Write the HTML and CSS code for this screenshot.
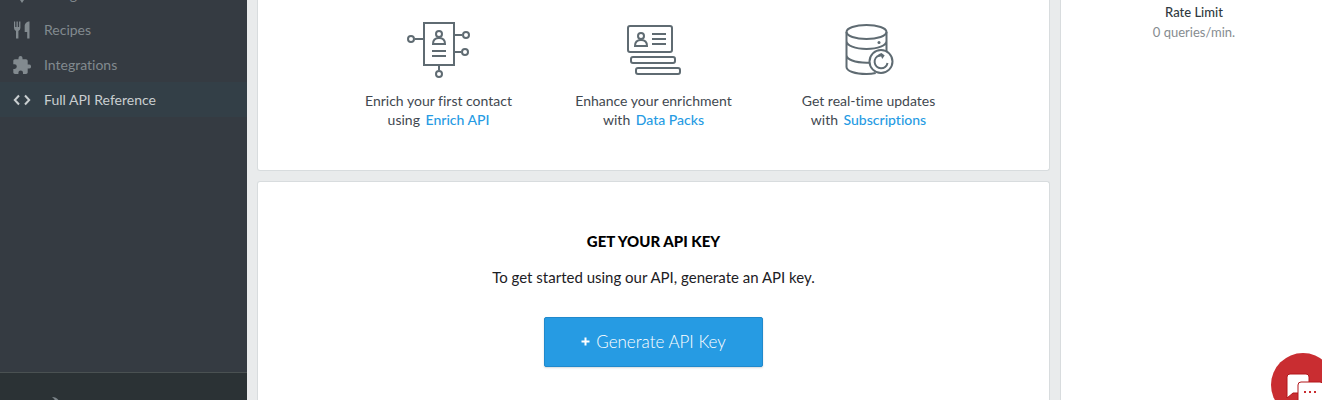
FILE: index.html
```html
<!DOCTYPE html>
<html lang="en">
<head>
<meta charset="utf-8">
<title>API Dashboard</title>
<link rel="stylesheet" href="styles.css">
</head>
<body>
<div class="layout">
  <aside class="sidebar">
    <nav class="nav">
      <a class="nav-item" href="#widgets">
        <svg class="nav-icon" viewBox="0 0 18 18"><path d="M9 17 5 11a6 6 0 1 1 8 0z"/></svg>
        Widgets
      </a>
      <a class="nav-item" href="#recipes">
        <svg class="nav-icon" viewBox="0 0 18 18"><path d="M1 0.500h1.200v5.500h1.300v-5.500h1.300v5.500h1.300v-5.500h1.300v6.500a3.200 3.200 0 0 1-2 2.900v7.500h-2.400v-7.500a3.200 3.200 0 0 1-2-2.900zM16.500 0.500v16.900h-2.300v-6.500h-2.500v-5.900c0-2.500 2.300-4.500 4.800-4.500z"/></svg>
        Recipes
      </a>
      <a class="nav-item" href="#integrations">
        <svg class="nav-icon" viewBox="0 0 18 18"><path d="M16 8.500h-1.300v-3.600c0-.9-.8-1.700-1.700-1.700h-3.500v-1.200a2 2 0 0 0-4 0v1.200h-3.500c-1 0-1.700.8-1.700 1.700v3.400h1.200a2.300 2.300 0 0 1 0 4.600H.3v3.400c0 .9.700 1.600 1.700 1.600h3.400v-1.200a2.300 2.300 0 0 1 4.600 0v1.200h3c.9 0 1.700-.7 1.700-1.600v-3.700H16a2.050 2.050 0 0 0 0-4.100z"/></svg>
        Integrations
      </a>
      <a class="nav-item nav-item-active" href="#reference">
        <svg class="nav-icon nav-icon-line" viewBox="0 0 18 18"><path d="M6 4.500 1.800 9 6 13.500M12 4.500 16.200 9 12 13.500"/></svg>
        Full API Reference
      </a>
    </nav>
    <div class="sidebar-footer">
      <svg class="footer-logo" viewBox="0 0 20 20"><path d="M4 0q5 0 7 4v16h-3v-13q0-4-4-7z"/></svg>
    </div>
  </aside>

  <main class="main">
    <section class="card features">
      <div class="feature">
        <svg class="feature-icon" viewBox="0 0 64 58">
          <rect x="17" y="2" width="30" height="42"/>
          <path d="M8 18h9M47 14h8M47 31h7M32 44v5M25 30h14M25 35h14"/>
          <circle cx="4" cy="18" r="3"/><circle cx="59" cy="14" r="3"/><circle cx="58" cy="31" r="3"/><circle cx="32" cy="53" r="3"/>
          <circle cx="32" cy="13" r="3"/><path d="M26 23c0-3.500 2-6 6-6s6 2.500 6 6z"/>
        </svg>
        <p class="feature-text">Enrich your first contact<br>using <a class="link" href="#enrich">Enrich API</a></p>
      </div>
      <div class="feature">
        <svg class="feature-icon" viewBox="0 0 64 58">
          <rect x="6" y="5" width="44" height="26" rx="2"/>
          <circle cx="19" cy="15" r="3"/><path d="M13 25c0-3.500 2-6 6-6s6 2.500 6 6zM30 13h14M30 18h14M30 23h14"/>
          <rect x="9" y="36" width="44" height="6" rx="2"/>
          <rect x="14" y="47" width="44" height="6" rx="2"/>
        </svg>
        <p class="feature-text">Enhance your enrichment<br>with <a class="link" href="#packs">Data Packs</a></p>
      </div>
      <div class="feature">
        <svg class="feature-icon" viewBox="0 0 64 58">
          <ellipse cx="29.500" cy="11" rx="20" ry="7"/>
          <path d="M9.500 11v35c0 4 8.500 7 20 7 3.500 0 6.500-.3 9.200-.9M49.500 11v19M9.500 20c0 4.500 8.500 8 20 8s20-3.500 20-8M9.500 34c0 4.500 8.500 7.700 20 7.700h3"/>
          <circle cx="42" cy="21.500" r="1.500" class="dot"/>
          <circle class="refresh-disc" cx="44" cy="40.500" r="11.500"/>
          <path d="M42.500 34.500a6.500 6.500 0 1 0 8 7.500"/>
          <path class="dot" d="M41.500 33.200l3-1.200 3.200 2.500-2.500 3.500-1-2.500-2.700.3z"/>
        </svg>
        <p class="feature-text">Get real-time updates<br>with <a class="link" href="#subscriptions">Subscriptions</a></p>
      </div>
    </section>

    <section class="card api-key">
      <h2 class="api-key-title">GET YOUR API KEY</h2>
      <p class="api-key-text">To get started using our API, generate an API key.</p>
      <button class="button" type="button">
        <svg class="plus" viewBox="0 0 9 9"><path d="M4.500 0.500v8M0.500 4.500h8"/></svg>
        Generate API Key
      </button>
    </section>
  </main>

  <aside class="usage">
    <h3 class="usage-title">Rate Limit</h3>
    <p class="usage-value">0 queries/min.</p>
  </aside>
</div>
<button class="chat" type="button" aria-label="Open chat">
  <svg class="chat-icon" viewBox="0 0 64 64">
    <path d="M19 21h16q3 0 3 3v16h-16l-6 5V24q0-3 3-3z"/>
    <path d="M30 29h19q3 0 3 3v23l-6-5H30q-3 0-3-3V32q0-3 3-3z"/>
    <path class="chat-dots" d="M33 38h2v2h-2zM38 38h2v2h-2zM43 38h2v2h-2z"/>
  </svg>
</button>
</body>
</html>
```

FILE: styles.css
```css
* { box-sizing: border-box; }

body {
  margin: 0;
  overflow: hidden;
  background: #e9ebec;
  color: #3f4850;
  font-family: Lato, "Liberation Sans", sans-serif;
  font-size: 14px;
  font-variant-ligatures: none;
}

h2, h3, p { margin: 0; }

.layout {
  display: grid;
  grid-template-columns: 247px 1fr 262px;
  height: 100vh;
  overflow: hidden;
}

.sidebar {
  display: flex;
  flex-direction: column;
  justify-content: space-between;
  min-height: 0;
  background: #353b42;
}

.nav { margin-top: -23px; }

.nav-item {
  display: flex;
  align-items: center;
  gap: 13px;
  height: 35px;
  padding: 0 13px;
  color: #828a8f;
  font-size: 14px;
  text-decoration: none;
}

.nav-item-active {
  background: #333f47;
  color: #c9ced0;
}

.nav-icon {
  width: 18px;
  height: 18px;
  fill: currentColor;
}

.nav-icon-line {
  fill: none;
  stroke: currentColor;
  stroke-width: 2;
}

.sidebar-footer {
  height: 28px;
  padding: 24px 48px 0;
  overflow: hidden;
  border-top: 1px solid #4a5152;
  background: #2b3235;
}

.footer-logo {
  display: block;
  width: 20px;
  height: 20px;
  fill: #7c8489;
}

.main {
  display: flex;
  flex-direction: column;
  gap: 10px;
  min-width: 0;
  padding: 0 10px;
}

.card {
  border: 1px solid #d8dcde;
  background: #fff;
}

.features {
  display: flex;
  justify-content: center;
  padding: 21px 0 41px;
  border-top: 0;
  border-radius: 0 0 3px 3px;
}

.feature {
  display: flex;
  flex-direction: column;
  align-items: center;
  gap: 12px;
  width: 215px;
}

.feature-icon {
  width: 64px;
  height: 58px;
  fill: none;
  stroke: #5f6b72;
  stroke-width: 2;
}

.feature-icon .dot {
  fill: #5f6b72;
  stroke: none;
}

.feature-icon .refresh-disc { fill: #fff; }

.feature-text {
  line-height: 19px;
  text-align: center;
}

.link {
  margin-left: 2px;
  color: #269be3;
  font-weight: 500;
  text-decoration: none;
}

.api-key {
  display: flex;
  flex: 1;
  flex-direction: column;
  align-items: center;
  padding-top: 49px;
  border-bottom: 0;
  border-radius: 3px 3px 0 0;
}

.api-key-title {
  color: #000;
  font-size: 15px;
  font-weight: 900;
  line-height: 20px;
}

.api-key-text {
  margin-top: 16px;
  color: #1c2024;
  font-size: 15px;
  line-height: 20px;
}

.button {
  display: flex;
  align-items: center;
  justify-content: center;
  gap: 6px;
  min-width: 218px;
  height: 50px;
  margin-top: 30px;
  padding: 0 36px 2px;
  border: 1px solid #2089cc;
  border-radius: 2px;
  background: #269be3;
  box-shadow: 0 1px 2px #d5d9dc;
  color: #fff;
  font-family: inherit;
  font-size: 17px;
  font-weight: 300;
}

.plus {
  width: 9px;
  height: 9px;
  stroke: #fff;
  stroke-width: 2;
}

.usage {
  padding: 2px 0 0 5px;
  border-left: 1px solid #d8dcde;
  background: #fff;
  line-height: 20px;
  text-align: center;
}

.usage-title {
  color: #2f3940;
  font-size: 13px;
  font-weight: 500;
}

.usage-value {
  color: #868c90;
  font-size: 13px;
}

.chat {
  position: fixed;
  right: -13px;
  bottom: -17px;
  width: 64px;
  height: 64px;
  padding: 0;
  border: 0;
  border-radius: 50%;
  background: #c92d31;
}

.chat-icon {
  display: block;
  width: 64px;
  height: 64px;
  fill: #fff;
  stroke: #b3161b;
  stroke-width: 1;
}

.chat-icon .chat-dots {
  fill: #c92d31;
  stroke: none;
}
```
